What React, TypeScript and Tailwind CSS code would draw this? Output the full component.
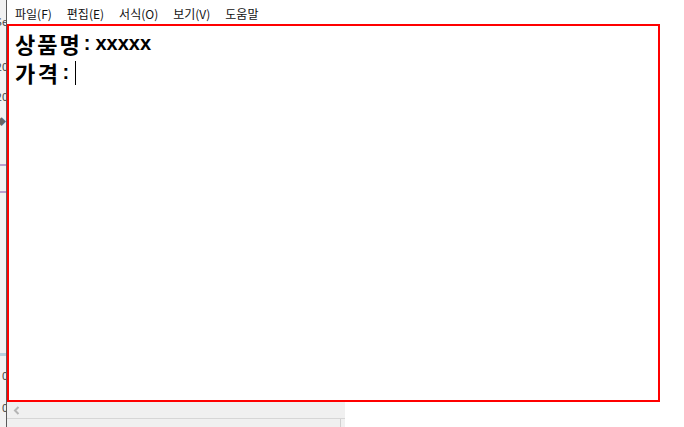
import React from "react";

const menus = ["파일(F)", "편집(E)", "서식(O)", "보기(V)", "도움말"];

const latin = { fontFamily: '"Liberation Sans", sans-serif' };

export default function App() {
  return (
    <div
      className="flex w-[684px] h-[427px] overflow-hidden bg-white text-black"
      style={{ fontFamily: '"Noto Sans CJK KR", "Liberation Sans", sans-serif' }}
    >
      {/* window behind, mostly covered */}
      <div className="w-[7px] h-full shrink-0 bg-[#f2f2f2] border-r border-[#5a5a5a] overflow-hidden flex flex-col items-end text-[11px] leading-none text-[#444]">
        <div className="mt-[16px] -mr-[2px]">Se</div>
        <div className="mt-[34px] -mr-[2px]">20</div>
        <div className="mt-[19px] -mr-[2px]">20</div>
        <div className="mt-[15px] text-[9px] text-[#666]">◆</div>
        <div className="mt-[38px] w-full h-[2px] bg-[#b9a0d0]" />
        <div className="mt-[25px] w-full h-[2px] bg-[#b9a0d0]" />
        <div className="mt-[160px] w-full h-[3px] bg-[#b8d2e0]" />
        <div className="mt-[14px] -mr-[2px]">0</div>
        <div className="mt-[21px] -mr-[2px]">0</div>
      </div>

      <div className="flex flex-col">
        {/* menu bar */}
        <div className="h-[24px] flex items-center gap-[15px] pl-[8px] pt-[3px] text-[12px] text-[#111]">
          {menus.map((m) => (
            <span key={m}>{m}</span>
          ))}
        </div>

        {/* highlighted editor area */}
        <div className="w-[653px] h-[378px] border-2 border-[#ff0000] pl-[6px] pt-[3px] text-[20px] leading-[29px] font-bold">
          <div className="h-[29px] flex items-center">
            <span className="text-[22px] tracking-[2px]">상품명</span>
            <span className="ml-[2px]" style={latin}>:</span>
            <span className="ml-[5px]" style={latin}>xxxxx</span>
          </div>
          <div className="h-[29px] flex items-center">
            <span className="text-[22px] tracking-[2.5px]">가격</span>
            <span className="ml-[2px]" style={latin}>:</span>
            <span className="ml-[6px] inline-block w-px h-[24px] bg-black" />
          </div>
        </div>

        {/* horizontal scrollbar */}
        <div className="w-[338px] h-[25px] bg-[#f0f0f0] flex flex-col">
          <div className="h-[16px] flex items-center pl-[6px]">
            <svg width="7" height="9" viewBox="0 0 7 9">
              <path d="M5.5 1 L2 4.5 L5.5 8" fill="none" stroke="#b5b5b5" strokeWidth="2" />
            </svg>
          </div>
          <div className="flex-1 border-t border-[#d6d6d6] flex justify-end">
            <div className="w-px h-full bg-[#d0d0d0] mr-[4px]" />
          </div>
        </div>
      </div>
    </div>
  );
}
